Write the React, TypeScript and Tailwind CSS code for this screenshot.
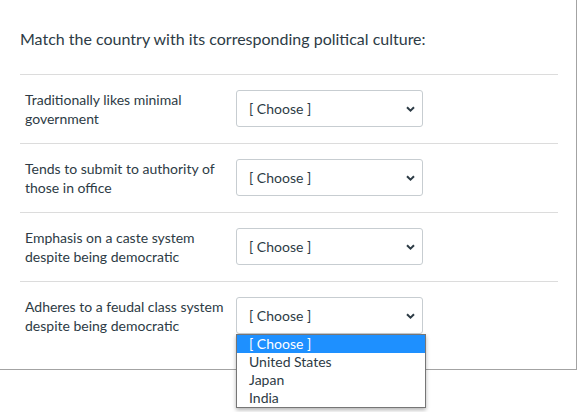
import React from "react";

interface Row {
  label: string;
  open?: boolean;
}

const rows: Row[] = [
  { label: "Traditionally likes minimal government" },
  { label: "Tends to submit to authority of those in office" },
  { label: "Emphasis on a caste system despite being democratic" },
  { label: "Adheres to a feudal class system despite being democratic", open: true },
];

const options = ["[ Choose ]", "United States", "Japan", "India"];

const Chevron = () => (
  <svg
    width="9"
    height="6"
    viewBox="0 0 9 6"
    className="absolute right-[7px] top-1/2 -translate-y-1/2 pointer-events-none"
  >
    <path d="M1 1.2 L4.5 4.6 L8 1.2" fill="none" stroke="#2d3b45" strokeWidth="2" />
  </svg>
);

const ChooseBox = ({ open }: { open?: boolean }) => (
  <div className="relative w-[187px] shrink-0">
    <div className="relative h-[37px] rounded-[3px] border border-[#c7cdd1] bg-white flex items-center pl-[12px] text-[14px] text-[#2d3b45]">
      [ Choose ]
      <Chevron />
    </div>
    {open && (
      <div className="absolute left-0 top-[37px] z-10 w-[190px] border border-[#767676] bg-white text-[14px] text-[#2d3b45] shadow-[0_2px_4px_rgba(0,0,0,0.3)]">
        {options.map((o, i) => (
          <div
            key={o}
            className={`h-[18px] leading-[18px] pl-[12px] ${
              i === 0 ? "bg-[#1e90ff] text-white" : ""
            }`}
          >
            {o}
          </div>
        ))}
      </div>
    )}
  </div>
);

const App: React.FC = () => {
  return (
    <div
      className="w-[579px] h-[412px] bg-white"
      style={{ fontFamily: "Lato, 'Noto Sans', sans-serif" }}
    >
      <div className="w-[577px] border-r border-b border-[#a3a3a3] px-[20px] pb-[19px]">
        <div className="h-[74px] flex items-center text-[16px] text-[#2d3b45] pt-[4px]">
          Match the country with its corresponding political culture:
        </div>
        {rows.map((r) => (
          <div
            key={r.label}
            className="border-t border-[#dcdcdc] py-[15px] flex items-start mr-[-2px]"
          >
            <div className="w-[216px] pl-[5px] pr-[8px] text-[14px] leading-[19px] text-[#2d3b45]">
              {r.label}
            </div>
            <ChooseBox open={r.open} />
          </div>
        ))}
      </div>
    </div>
  );
};

export default App;
